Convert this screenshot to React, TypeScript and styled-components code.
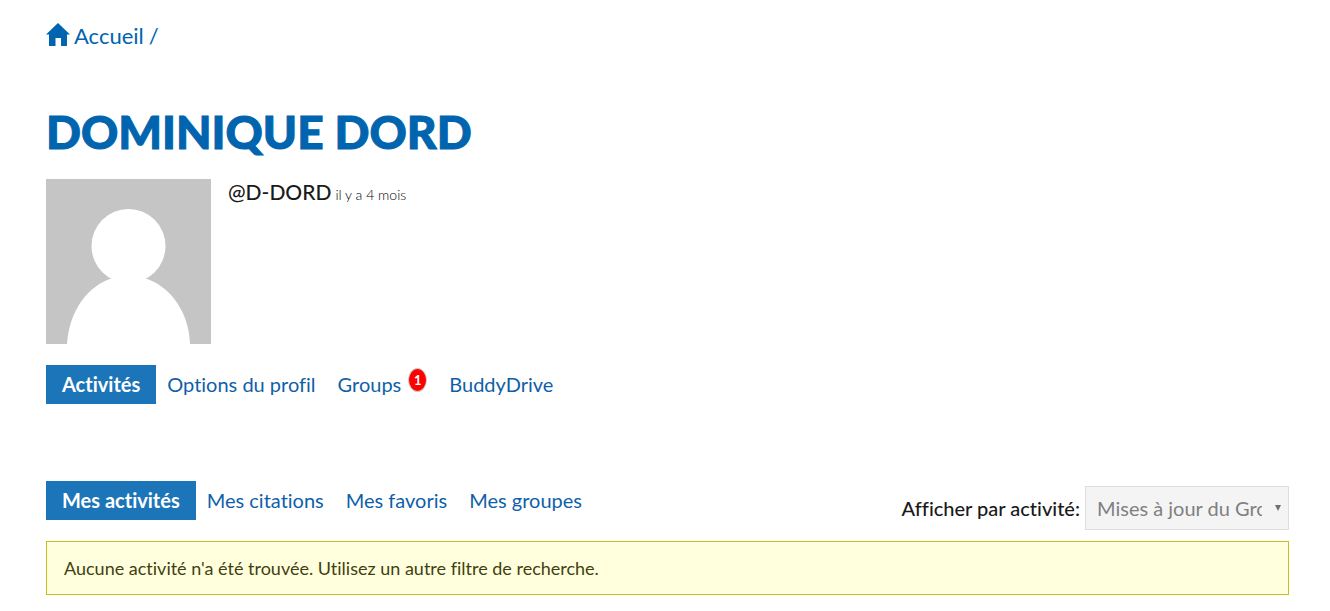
import React from "react";
import styled, { createGlobalStyle } from "styled-components";

const blue = "#0064ae";
const tabBlue = "#1c75b8";

const GlobalStyle = createGlobalStyle`
  *, *::before, *::after { box-sizing: border-box; }
  body {
    margin: 0;
    background: #fff;
    color: #1a1a1a;
    font-family: Lato, "Open Sans", sans-serif;
    font-variant-ligatures: none;
  }
  a { text-decoration: none; }
`;

const Page = styled.main`
  padding: 20px 41px 16px 46px;
`;

const Breadcrumb = styled.nav`
  display: flex;
  align-items: center;
  gap: 5px;
  height: 32px;
  color: ${blue};
  font-size: 22px;
  line-height: 32px;
`;

const HomeLink = styled.a`
  display: flex;
  align-items: center;
  gap: 4px;
  color: inherit;
`;

const HomeIcon = styled.svg`
  width: 24px;
  height: 24px;
  margin-bottom: 4px;
`;

const Title = styled.h1`
  margin: 50px 0 17px;
  color: ${blue};
  font-family: "Lato Black", Lato, sans-serif;
  font-size: 46px;
  font-weight: 900;
  line-height: 60px;
  text-transform: uppercase;
  -webkit-text-stroke: 1px ${blue};
`;

const Profile = styled.header`
  display: flex;
  gap: 17px;
`;

const Avatar = styled.svg`
  width: 165px;
  height: 165px;
`;

const Identity = styled.div`
  display: flex;
  align-items: baseline;
  align-self: flex-start;
  gap: 4px;
`;

const Handle = styled.h2`
  margin: 0;
  font-family: "Lato Medium", Lato, sans-serif;
  font-size: 21px;
  font-weight: 500;
  line-height: 26px;
`;

const LastSeen = styled.span`
  color: #000;
  font-size: 14px;
  font-weight: 300;
`;

const Tabs = styled.ul`
  display: flex;
  margin: 0;
  padding: 0;
  list-style: none;
`;

const Tab = styled.a<{ $active?: boolean }>`
  display: flex;
  height: 39px;
  padding: ${(p) => (p.$active ? "0 16px" : "0 11px")};
  background: ${(p) => (p.$active ? tabBlue : "transparent")};
  color: ${(p) => (p.$active ? "#fff" : "#0f5fa8")};
  font-size: 20px;
  font-weight: ${(p) => (p.$active ? 700 : 400)};
  line-height: 38px;
  white-space: nowrap;
`;

const Count = styled.span`
  width: 19px;
  height: 24px;
  margin: 3px 0 0 7px;
  border: 1px solid #ccc;
  border-radius: 50%;
  background: #f00;
  color: #fff;
  font-size: 13px;
  font-weight: 700;
  line-height: 22px;
  text-align: center;
`;

const ProfileNav = styled.nav`
  margin-top: 21px;
`;

const ActivityBar = styled.div`
  display: flex;
  align-items: flex-start;
  justify-content: space-between;
  margin-top: 77px;
`;

const Filter = styled.div`
  display: flex;
  align-items: center;
  gap: 5px;
  margin-top: 5px;
`;

const FilterLabel = styled.label`
  font-family: "Lato Medium", Lato, sans-serif;
  font-size: 20px;
  font-weight: 500;
`;

const SelectBox = styled.div`
  display: grid;
  align-items: center;
  width: 204px;
`;

const Select = styled.select`
  grid-area: 1 / 1;
  width: 100%;
  height: 44px;
  padding: 0 26px 0 11px;
  appearance: none;
  border: 1px solid #ddd;
  border-radius: 0;
  background: #f4f4f4;
  color: #808080;
  font: inherit;
  font-size: 20px;
  text-overflow: clip;
`;

const Arrow = styled.svg`
  grid-area: 1 / 1;
  justify-self: end;
  width: 6px;
  height: 6px;
  margin-right: 8px;
  pointer-events: none;
`;

const Notice = styled.p`
  margin: 11px 0 0;
  padding: 13px 17px;
  border: 1px solid #c9be1e;
  background: #ffffdd;
  color: #3f3f12;
  font-size: 18px;
  line-height: 26px;
`;

export default function App() {
  return (
    <>
      <GlobalStyle />
      <Page>
        <Breadcrumb>
          <HomeLink href="#accueil">
            <HomeIcon viewBox="0 0 24 24" fill={blue} aria-hidden="true">
              <path d="M12 1 24 12.500H21V24H15V16H9.500V24H3V12.500H0Z" />
            </HomeIcon>
            Accueil
          </HomeLink>
          <span>/</span>
        </Breadcrumb>

        <Title>Dominique Dord</Title>

        <Profile>
          <Avatar viewBox="0 0 165 165" role="img" aria-label="Dominique Dord">
            <rect width="165" height="165" fill="#c5c5c5" />
            <circle cx="82.5" cy="67" r="37" fill="#fff" />
            <path d="M21 165C23 132 42 106 67 99H98C123 106 143 132 144 165Z" fill="#fff" />
          </Avatar>
          <Identity>
            <Handle>@D-DORD</Handle>
            <LastSeen>il y a 4 mois</LastSeen>
          </Identity>
        </Profile>

        <ProfileNav>
          <Tabs>
            <li><Tab href="#activites" $active>Activités</Tab></li>
            <li><Tab href="#options">Options du profil</Tab></li>
            <li><Tab href="#groups">Groups<Count>1</Count></Tab></li>
            <li><Tab href="#buddydrive">BuddyDrive</Tab></li>
          </Tabs>
        </ProfileNav>

        <ActivityBar>
          <nav>
            <Tabs>
              <li><Tab href="#mes-activites" $active>Mes activités</Tab></li>
              <li><Tab href="#citations">Mes citations</Tab></li>
              <li><Tab href="#favoris">Mes favoris</Tab></li>
              <li><Tab href="#groupes">Mes groupes</Tab></li>
            </Tabs>
          </nav>
          <Filter>
            <FilterLabel htmlFor="activity-filter">Afficher par activité:</FilterLabel>
            <SelectBox>
              <Select id="activity-filter">
                <option>Mises à jour du Groupe</option>
              </Select>
              <Arrow viewBox="0 0 6 6" fill="#707070" aria-hidden="true">
                <path d="M0 0H6L3 6Z" />
              </Arrow>
            </SelectBox>
          </Filter>
        </ActivityBar>

        <Notice>Aucune activité n'a été trouvée. Utilisez un autre filtre de recherche.</Notice>
      </Page>
    </>
  );
}
